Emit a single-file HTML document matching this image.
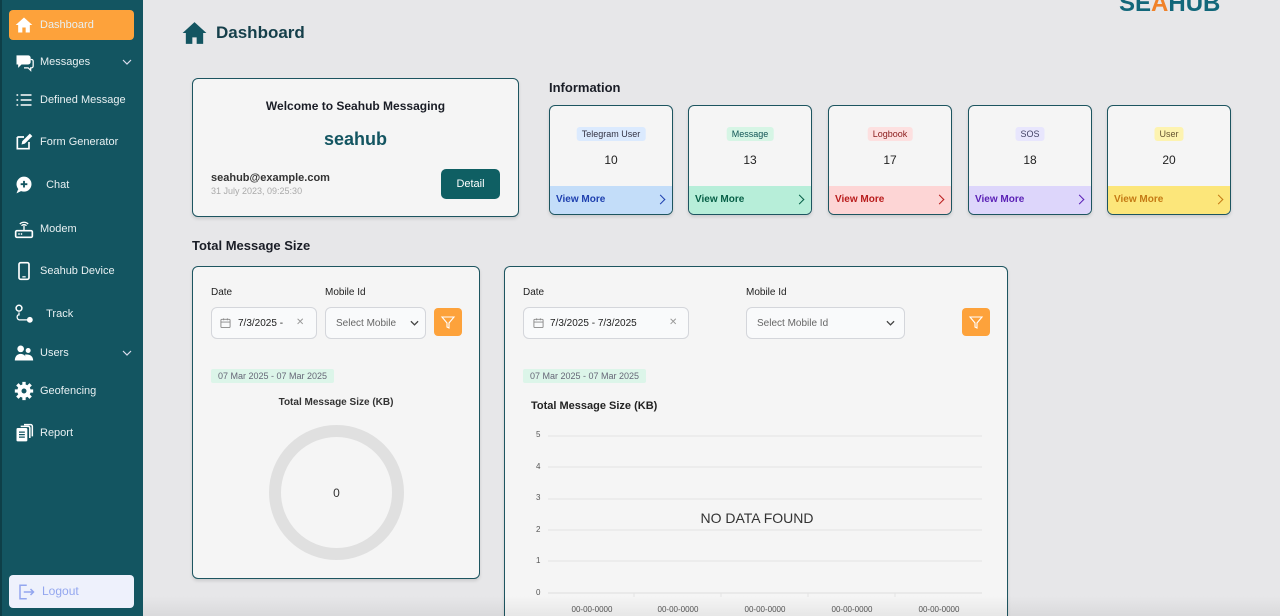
<!DOCTYPE html>
<html style="overflow:hidden;width:1280px;height:616px"><head><meta charset="utf-8"><style>
*{box-sizing:border-box;margin:0;padding:0}
body{width:1280px;height:616px;overflow:hidden;background:#e7e7e9;font-family:"Liberation Sans",sans-serif;position:relative;color:#1f2430}
.sb{position:absolute;left:0;top:0;width:143px;height:616px;background:#135561;box-shadow:inset 2px 0 0 #0e3f48}
.it{position:absolute;left:14px;color:#e8f0f2;font-size:11px;display:flex;align-items:center}
.it svg{width:20px;height:20px;margin-right:6px;fill:#fff}
.act{position:absolute;left:9px;top:10px;width:125px;height:30px;background:#fda23b;border-radius:4px}
.chev{position:absolute;left:122px;width:10px;height:10px}
.a{position:absolute}
.card{position:absolute;background:#f5f5f5;border:1px solid #1d5560;border-radius:6px;box-shadow:0 2px 3px rgba(0,0,0,.12);overflow:hidden}
.ic{width:124px;height:110px;top:105px}
.tag{position:absolute;top:21px;left:50%;transform:translateX(-50%);font-size:9px;padding:2px 5px;border-radius:3px;white-space:nowrap}
.num{position:absolute;top:47px;width:100%;text-align:center;font-size:12px;color:#222}
.ft{position:absolute;left:0;bottom:0;width:100%;height:28px;font-size:10px;font-weight:bold;padding:8px 0 0 6px}
.ft:after{content:"";position:absolute;right:8px;top:10px;width:6px;height:6px;border-right:1px solid currentColor;border-top:1px solid currentColor;transform:rotate(45deg)}
.lbl{position:absolute;font-size:10px;color:#222}
.inp{position:absolute;height:32px;border:1px solid #d4d6db;border-radius:6px;background:#f9fafb;font-size:10px;color:#222;padding:10px 0 0 26px;white-space:nowrap;overflow:hidden}
.flt{position:absolute;width:28px;height:28px;background:#fda23b;border-radius:4px}
.rng{position:absolute;background:#dcf5e9;color:#667;font-size:9px;padding:2px 7px;border-radius:2px}
</style></head><body>
<div class="sb">
<div class="act"></div>
<div class="it" style="top:15px"><svg viewBox="0 0 24 24"><path d="M12 3 2 12h3v9h5v-6h4v6h5v-9h3z" fill="#fff"/></svg>Dashboard</div>
<div class="it" style="top:52px"><svg viewBox="0 0 24 24"><path d="M3 4h14a3 3 0 0 1 3 3v5a3 3 0 0 1-3 3H9l-4 4v-4H3z"/><path d="M20 9h1a2 2 0 0 1 2 2v6a2 2 0 0 1-2 2h-1v3l-3-3h-5" fill="none" stroke="#fff" stroke-width="1.5"/></svg>Messages</div>
<svg class="chev" style="top:57px" viewBox="0 0 10 10"><path d="M1 3l4 4 4-4" fill="none" stroke="#dde" stroke-width="1.2"/></svg>
<div class="it" style="top:90px"><svg viewBox="0 0 24 24"><path d="M3 6h2M3 12h2M3 18h2M8 6h13M8 12h13M8 18h13" stroke="#fff" stroke-width="1.8" fill="none"/></svg>Defined Message</div>
<div class="it" style="top:132px"><svg viewBox="0 0 24 24"><path d="M4 6h8M4 6v14h14v-8" fill="none" stroke="#fff" stroke-width="2"/><path d="M9 15l1-4 9-9 3 3-9 9z"/></svg>Form Generator</div>
<div class="it" style="top:175px"><svg viewBox="0 0 24 24"><circle cx="12" cy="11" r="9"/><path d="M5 17l-2 5 6-3z"/><path d="M12 7v8M8 11h8" stroke="#135561" stroke-width="2.2"/></svg>&nbsp;&nbsp;Chat</div>
<div class="it" style="top:219px"><svg viewBox="0 0 24 24"><rect x="2" y="14" width="20" height="8" rx="1.5" fill="none" stroke="#fff" stroke-width="2"/><path d="M12 14V8M7 6a7 7 0 0 1 10 0M9 8a4 4 0 0 1 6 0" fill="none" stroke="#fff" stroke-width="1.6"/><circle cx="6" cy="18" r="1"/><circle cx="9" cy="18" r="1"/></svg>Modem</div>
<div class="it" style="top:261px"><svg viewBox="0 0 24 24"><rect x="6" y="2" width="12" height="20" rx="2" fill="none" stroke="#fff" stroke-width="2"/><path d="M10 19h4" stroke="#fff" stroke-width="1.5"/></svg>Seahub Device</div>
<div class="it" style="top:304px"><svg viewBox="0 0 24 24"><circle cx="6" cy="5" r="3.5" fill="none" stroke="#fff" stroke-width="1.8"/><path d="M6 10v3c-3 0-3 5 0 6h10" fill="none" stroke="#fff" stroke-width="1.5"/><circle cx="19" cy="19" r="3.5"/></svg>&nbsp;&nbsp;Track</div>
<div class="it" style="top:343px"><svg viewBox="0 0 24 24"><circle cx="8" cy="7" r="4"/><circle cx="17" cy="9" r="3"/><path d="M1 21c0-5 3-8 7-8s7 3 7 8zM14 21c0-3 0-5-1-7 5-1 10 1 10 7z"/></svg>Users</div>
<svg class="chev" style="top:348px" viewBox="0 0 10 10"><path d="M1 3l4 4 4-4" fill="none" stroke="#dde" stroke-width="1.2"/></svg>
<div class="it" style="top:381px"><svg viewBox="0 0 24 24"><circle cx="12" cy="12" r="8"/><path d="M12 1v22M1 12h22M4 4l16 16M20 4 4 20" stroke="#fff" stroke-width="4"/><circle cx="12" cy="12" r="3" fill="#135561"/></svg>Geofencing</div>
<div class="it" style="top:423px"><svg viewBox="0 0 24 24"><rect x="3" y="6" width="13" height="16" rx="1.5"/><path d="M8 4h9a2 2 0 0 1 2 2v12M12 2h8a2 2 0 0 1 2 2v12" fill="none" stroke="#fff" stroke-width="1.8"/><path d="M6 11h7M6 14h7M6 17h7" stroke="#135561" stroke-width="1.5"/></svg>Report</div>
<div class="a" style="left:9px;top:575px;width:125px;height:33px;background:#eef1fc;border-radius:4px;color:#93a6ef;font-size:12px;padding:9px 0 0 33px">Logout
<svg class="a" style="left:8px;top:8px" width="18" height="18" viewBox="0 0 24 24"><path d="M13 3H4v18h9M9 12h13M18 8l4 4-4 4" fill="none" stroke="#93a6ef" stroke-width="2"/></svg></div>
</div>

<div class="a" style="left:1119px;top:-10px;font-size:24px;font-weight:bold;color:#12677a;letter-spacing:0px">SE<span style="color:#f0822a">A</span>HUB</div>

<svg class="a" style="left:181px;top:20px" width="27" height="26" viewBox="0 0 24 24"><path d="M12 2 1 12h3v10h6v-6h4v6h6V12h3z" fill="#135561"/></svg>
<div class="a" style="left:216px;top:23px;font-size:17px;font-weight:bold;color:#153f4a">Dashboard</div>

<div class="card" style="left:192px;top:78px;width:327px;height:139px">
<div class="a" style="top:20px;width:100%;text-align:center;font-size:12px;font-weight:bold;color:#1a1d26">Welcome to Seahub Messaging</div>
<div class="a" style="top:50px;width:100%;text-align:center;font-size:18px;font-weight:bold;color:#135561">seahub</div>
<div class="a" style="left:18px;top:93px;font-size:11px;font-weight:bold;color:#333">seahub@example.com</div>
<div class="a" style="left:18px;top:107px;font-size:9px;color:#aaa">31 July 2023, 09:25:30</div>
<div class="a" style="left:248px;top:90px;width:59px;height:30px;background:#0f5f63;border-radius:5px;color:#fff;font-size:11px;text-align:center;line-height:30px">Detail</div>
</div>

<div class="a" style="left:549px;top:80px;font-size:13px;font-weight:bold;color:#1a1d26">Information</div>
<div class="card ic" style="left:549px"><div class="tag" style="background:#dbeafe;color:#334">Telegram User</div><div class="num">10</div><div class="ft" style="background:#c3ddf9;color:#1e40af">View More</div></div>
<div class="card ic" style="left:688px"><div class="tag" style="background:#d6f5e5;color:#155">Message</div><div class="num">13</div><div class="ft" style="background:#b7eed9;color:#065f46">View More</div></div>
<div class="card ic" style="left:828px"><div class="tag" style="background:#fde0e0;color:#8b1c1c">Logbook</div><div class="num">17</div><div class="ft" style="background:#fdd5d5;color:#b91c1c">View More</div></div>
<div class="card ic" style="left:968px"><div class="tag" style="background:#e8e6fd;color:#446">SOS</div><div class="num">18</div><div class="ft" style="background:#ddd6fb;color:#5b21b6">View More</div></div>
<div class="card ic" style="left:1107px"><div class="tag" style="background:#fdf3b0;color:#653">User</div><div class="num">20</div><div class="ft" style="background:#fce67a;color:#c57a14">View More</div></div>

<div class="a" style="left:192px;top:238px;font-size:13px;font-weight:bold;color:#1a1d26">Total Message Size</div>

<div class="card" style="left:192px;top:266px;width:288px;height:313px">
<div class="lbl" style="left:18px;top:20px">Date</div>
<div class="lbl" style="left:132px;top:20px">Mobile Id</div>
<div class="inp" style="left:18px;top:40px;width:106px">7/3/2025 - <span class="a" style="left:84px;top:9px;color:#999">✕</span></div>
<svg class="a" style="left:27px;top:50px" width="11" height="12" viewBox="0 0 12 12"><rect x="1" y="2" width="10" height="9" rx="1" fill="none" stroke="#888"/><path d="M1 5h10M4 1v2M8 1v2" stroke="#888"/></svg>
<div class="inp" style="left:132px;top:40px;width:101px;padding-left:10px;color:#666">Select Mobile<svg class="a" style="left:84px;top:12px" width="9" height="7" viewBox="0 0 10 7"><path d="M1 1l4 4 4-4" fill="none" stroke="#444" stroke-width="1.4"/></svg></div>
<div class="flt" style="left:241px;top:41px"><svg width="28" height="28" viewBox="0 0 28 28"><path d="M8 9h12l-5 6v5l-2-1v-4z" fill="none" stroke="#fff" stroke-width="1.1"/></svg></div>
<div class="rng" style="left:18px;top:102px">07 Mar 2025 - 07 Mar 2025</div>
<div class="a" style="top:130px;width:100%;text-align:center;font-size:10px;font-weight:bold;color:#333">Total Message Size (KB)</div>
<div class="a" style="left:76px;top:158px;width:135px;height:135px;border:12px solid #e0e0e0;border-radius:50%"></div>
<div class="a" style="left:0;top:219px;width:287px;text-align:center;font-size:12px;color:#333">0</div>
</div>

<div class="card" style="left:504px;top:266px;width:504px;height:360px;border-bottom:none">
<div class="lbl" style="left:18px;top:20px">Date</div>
<div class="lbl" style="left:241px;top:20px">Mobile Id</div>
<div class="inp" style="left:18px;top:40px;width:166px">7/3/2025 - 7/3/2025<span class="a" style="left:145px;top:9px;color:#999">✕</span></div>
<svg class="a" style="left:28px;top:50px" width="11" height="12" viewBox="0 0 12 12"><rect x="1" y="2" width="10" height="9" rx="1" fill="none" stroke="#888"/><path d="M1 5h10M4 1v2M8 1v2" stroke="#888"/></svg>
<div class="inp" style="left:241px;top:40px;width:159px;padding-left:10px;color:#666">Select Mobile Id<svg class="a" style="left:139px;top:12px" width="9" height="7" viewBox="0 0 10 7"><path d="M1 1l4 4 4-4" fill="none" stroke="#444" stroke-width="1.4"/></svg></div>
<div class="flt" style="left:457px;top:41px"><svg width="28" height="28" viewBox="0 0 28 28"><path d="M8 9h12l-5 6v5l-2-1v-4z" fill="none" stroke="#fff" stroke-width="1.1"/></svg></div>
<div class="rng" style="left:18px;top:102px">07 Mar 2025 - 07 Mar 2025</div>
<svg class="a" style="left:0;top:120px" width="504" height="230" viewBox="0 0 504 230" font-family="Liberation Sans" font-size="8" fill="#555">
<text x="26" y="22" font-size="11" font-weight="bold" fill="#222">Total Message Size (KB)</text>
<g stroke="#e4e4e4"><path d="M43 49h434M43 80h434M43 112h434M43 143h434M43 174h434"/><path d="M43 206h434" stroke="#ddd"/><path d="M129 206v4M216 206v4M303 206v4M390 206v4"/></g>
<text x="31" y="50">5</text><text x="31" y="82">4</text><text x="31" y="113">3</text><text x="31" y="145">2</text><text x="31" y="176">1</text><text x="31" y="208">0</text>
<text x="252" y="136" font-size="14" text-anchor="middle" fill="#333">NO DATA FOUND</text>
<g text-anchor="middle"><text x="87" y="225">00-00-0000</text><text x="173" y="225">00-00-0000</text><text x="260" y="225">00-00-0000</text><text x="347" y="225">00-00-0000</text><text x="434" y="225">00-00-0000</text></g>
</svg>
</div>
<div class="a" style="left:143px;top:596px;width:1137px;height:20px;background:linear-gradient(rgba(0,0,0,0),rgba(0,0,0,.06))"></div>
</body></html>
